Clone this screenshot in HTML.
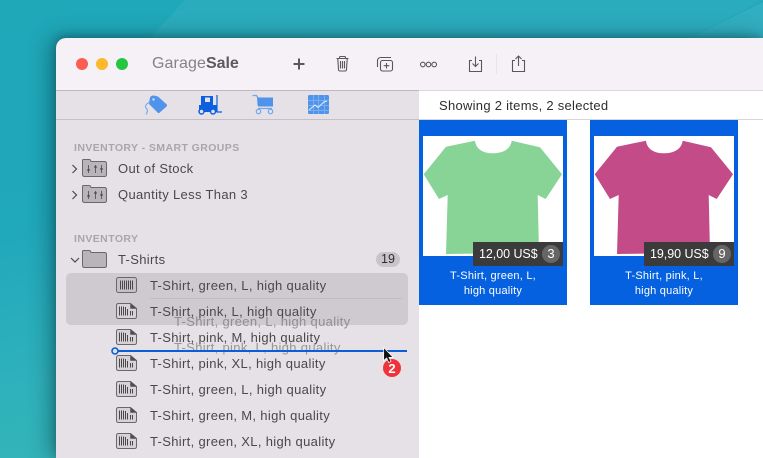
<!DOCTYPE html>
<html><head><meta charset="utf-8">
<style>
html,body{margin:0;padding:0;width:763px;height:458px;overflow:hidden}
body{position:relative;font-family:"Liberation Sans",sans-serif;background:#2aaeb8}
.abs{position:absolute}
.bg{left:0;top:0;width:763px;height:458px;background:linear-gradient(165deg,#1fa8b8 0%,#20a8bb 35%,#2fb2bc 60%,#3fb8b0 100%)}
.win{left:56px;top:38px;width:707px;height:420px;background:#f5f1f7;border-radius:10px 0 0 0;box-shadow:-6px 0 22px rgba(0,40,50,.42),0 -2px 8px rgba(0,40,50,.3);overflow:hidden}
.t{position:absolute;white-space:nowrap;font-size:13px;line-height:16px;color:#4b484c;letter-spacing:.33px}
.h{position:absolute;white-space:nowrap;font-size:10.5px;line-height:12px;font-weight:bold;color:#a9a6aa;letter-spacing:.42px}
.ghost{position:absolute;white-space:nowrap;font-size:13px;line-height:16px;color:#6a676b;opacity:.62;letter-spacing:.33px;filter:blur(.35px)}
.cap{position:absolute;text-align:center;color:#fff;font-size:11px;line-height:15px;width:148px;letter-spacing:.22px}
.price{position:absolute;width:90px;height:24px;background:#3b3b3b;color:#fff;font-size:12.5px;line-height:24px}
.price span{position:absolute;left:6px;top:0;white-space:nowrap;letter-spacing:-.05px}
.price b{position:absolute;left:69px;top:3px;width:18px;height:18px;border-radius:9px;background:#666;font-weight:normal;text-align:center;line-height:18px;font-size:13px}
</style></head><body>
<div class="abs bg"></div>
<svg class="abs" style="left:0;top:0" width="763" height="40"><path d="M150 38L185 0H763V0L690 38Z" fill="#fff" opacity=".05"/><path d="M690 38L763 2V38Z" fill="#fff" opacity=".08"/></svg>
<div class="abs win"></div>

<!-- panes -->
<div class="abs" style="left:56px;top:90px;width:363px;height:368px;background:#e5e1e6"></div>
<div class="abs" style="left:419px;top:90px;width:344px;height:368px;background:#fff"></div>
<div class="abs" style="left:56px;top:90px;width:363px;height:1px;background:#bdb9bd"></div>
<div class="abs" style="left:419px;top:90px;width:344px;height:1px;background:#dcd8de"></div>
<div class="abs" style="left:56px;top:119px;width:363px;height:1px;background:#c4c0c5"></div>
<div class="abs" style="left:419px;top:119px;width:344px;height:1px;background:#d8d5d8"></div>

<!-- traffic lights -->
<div class="abs" style="left:76px;top:58px;width:12px;height:12px;border-radius:6px;background:#fd5c55"></div>
<div class="abs" style="left:96px;top:58px;width:12px;height:12px;border-radius:6px;background:#fdb82d"></div>
<div class="abs" style="left:116px;top:58px;width:12px;height:12px;border-radius:6px;background:#27c640"></div>

<div class="abs" style="left:152px;top:53px;font-size:16px;line-height:21px;color:#858287;white-space:nowrap;letter-spacing:.1px">Garage<span style="color:#5c595e;font-weight:bold;letter-spacing:-.05px">Sale</span></div>

<!-- toolbar + tab icons -->
<svg class="abs" style="left:0;top:0" width="763" height="125" fill="none" stroke="#5a575b">
<path d="M299 58.5V69.5M293.500 64H304.500" stroke-width="2"/>
<g stroke-width="1.1"><path d="M336.500 58.500H348.500M339.500 58.500V57.200Q339.500 56.500 340.500 56.500H344.500Q345.500 56.500 345.500 57.200V58.500M337.800 59L338.500 69.500Q338.600 71 340 71H345Q346.400 71 346.500 69.500L347.200 59M340.500 61V68.500M342.500 61V68.500M344.500 61V68.500"/>
<path d="M391 57.500H381Q377.500 57.500 377.500 61V67"/><rect x="380.500" y="60.500" width="12" height="10.500" rx="2"/><path d="M386.500 63V68.500M383.700 65.700H389.300"/>
<circle cx="422.800" cy="64.500" r="2.300"/><circle cx="428.500" cy="64.500" r="2.300"/><circle cx="434.200" cy="64.500" r="2.300"/>
<path d="M472 60.500H469.500V71.500H481.500V60.500H479M475.500 56.500V66M472.500 63.500L475.500 66.500L478.500 63.500"/>
<path d="M515 60.500H512.500V71.500H524.500V60.500H522M518.500 66V56.500M515.500 59L518.500 56L521.500 59"/></g>
<path d="M496.500 54V74" stroke="#e8e4ea" stroke-width="1"/>
<!-- tag -->
<path d="M153 95.500Q154 95.300 158 96.500L166.800 104.500Q167.300 105.500 166.800 106.300L159.500 112.800Q158.500 113.500 157.800 112.800L149.500 104.500Q149 104 149 103L150 97.500Q150.500 96 153 95.500Z" fill="#4f94ea" stroke="none"/>
<circle cx="153.500" cy="99.500" r="1.200" fill="#cfe0f6" stroke="none"/>
<path d="M150 102Q145 104 145.500 107.500Q149 110 146 114.500" stroke="#6ea6ec" stroke-width="1"/>
<!-- forklift -->
<path d="M201 96H213V105H217V112H199V105H201Z" fill="#0a60e0" stroke="none"/><rect x="205" y="97.500" width="5" height="4.500" fill="#e5e1e6" stroke="none"/>
<path d="M217 95V112H222" stroke="#0a60e0" stroke-width="1.200"/>
<circle cx="201.500" cy="111.500" r="2.500" fill="#e5e1e6" stroke="#0a60e0" stroke-width="1.500"/><circle cx="213" cy="111.500" r="2.500" fill="#e5e1e6" stroke="#0a60e0" stroke-width="1.500"/>
<!-- cart -->
<path d="M252.500 95.500H256.500L258 98V105" stroke="#6ea6ec" stroke-width="1.300"/><path d="M257 97.500H273V106.500H258Z" fill="#4f94ea" stroke="none"/><path d="M258 108.500H272" stroke="#6ea6ec" stroke-width="1.200"/>
<circle cx="258.500" cy="111.500" r="2.200" fill="#e5e1e6" stroke="#6ea6ec" stroke-width="1.200"/><circle cx="270.500" cy="111.500" r="2.200" fill="#e5e1e6" stroke="#6ea6ec" stroke-width="1.200"/>
<!-- chart -->
<rect x="308" y="95" width="21" height="19" rx="1.500" fill="#4f94ea" stroke="none"/>
<path d="M308 100.500H329M308 105.500H329M308 110.500H329M313.500 95V114M318.500 95V114M324.500 95V114" stroke="#78adef" stroke-width="1"/>
<path d="M309 110L315 105L318 107.500L324 102L327 101" stroke="#e6effb" stroke-width="1"/>
</svg>

<div class="t" style="left:439px;top:98px;color:#2f2d30;letter-spacing:.28px">Showing 2 items, 2 selected</div>

<!-- sidebar content -->
<div class="h" style="left:74px;top:142px">INVENTORY - SMART GROUPS</div>
<div class="h" style="left:74px;top:233px">INVENTORY</div>
<div class="abs" style="left:66px;top:273px;width:342px;height:52px;border-radius:5px;background:#cfcacf"></div>
<div class="abs" style="left:150px;top:298px;width:252px;height:1px;background:#c2bdc2"></div>

<div class="t" style="left:118px;top:161px">Out of Stock</div>
<div class="t" style="left:118px;top:187px">Quantity Less Than 3</div>
<div class="t" style="left:118px;top:252px">T-Shirts</div>
<div class="t" style="left:150px;top:278px">T-Shirt, green, L, high quality</div>
<div class="t" style="left:150px;top:304px">T-Shirt, pink, L, high quality</div>
<div class="t" style="left:150px;top:330px">T-Shirt, pink, M, high quality</div>
<div class="t" style="left:150px;top:356px">T-Shirt, pink, XL, high quality</div>
<div class="t" style="left:150px;top:382px">T-Shirt, green, L, high quality</div>
<div class="t" style="left:150px;top:408px">T-Shirt, green, M, high quality</div>
<div class="t" style="left:150px;top:434px">T-Shirt, green, XL, high quality</div>

<div class="abs" style="left:376px;top:252px;width:24px;height:15px;border-radius:8px;background:#c8c4c8;color:#2f2d30;font-size:12.500px;line-height:15px;text-align:center">19</div>

<svg class="abs" style="left:0;top:0" width="420" height="458" fill="none" stroke="#5b585c" stroke-width="1">
<defs>
<g id="bc0"><rect x=".5" y=".5" width="20" height="15" rx="2" fill="#c6c1c6" stroke="#6a676b"/><path d="M4.500 3.500V12.500M6.500 3.500V12.500M8.500 3.500V12.500M10.500 3.500V12.500M12.500 3.500V12.500M14.500 3.500V12.500M16.500 3.500V12.500" stroke="#4a474b" stroke-width="1"/></g>
<g id="bc"><path d="M2.500 .5H14.500L20.500 5.500V13.500Q20.500 15.500 18.500 15.500H2.500Q.5 15.500 .5 13.500V2.500Q.5 .5 2.500 .5Z" fill="#d6d2d6" stroke="#6a676b"/><path d="M14.500 .5L20.500 5.500H14.500Z" fill="#514e52" stroke="#514e52" stroke-width=".5"/><path d="M3.500 3.500V12.500M5.500 3.500V12.500M7.500 3.500V12.500M9.500 4V12.500M11.500 6V12.500M14.500 8V12.500M16.500 8V12.500" stroke="#4a474b" stroke-width="1"/></g>
<g id="sf"><path d="M.5 4V1.500Q.5 .5 1.500 .5H7.500Q8.500 .5 9 2.500H22.500Q24.500 2.500 24.500 4.500V15.500Q24.500 17.500 22.500 17.500H2.500Q.5 17.500 .5 15.500Z" fill="#b9b4b9" stroke="#6a676b"/><path d="M6.500 6V14M13.500 6V14M19.500 6V14" stroke="#4a474b" stroke-width=".8"/><path d="M5 11H8M12 8H15M18 10H21" stroke="#3f3d40" stroke-width="1"/></g>
</defs>
<use href="#sf" x="82" y="159"/><use href="#sf" x="82" y="185"/>
<g transform="translate(82 250)"><path d="M.5 4V1.500Q.5 .5 1.500 .5H7.500Q8.500 .5 9 2.500H22.500Q24.500 2.500 24.500 4.500V15.500Q24.500 17.500 22.500 17.500H2.500Q.5 17.500 .5 15.500Z" fill="#b9b4b9" stroke="#6a676b"/></g>
<path d="M72.500 165L76.500 169L72.500 173M72.500 191L76.500 195L72.500 199M71 258L75 262L79 258" stroke="#4b484c" stroke-width="1.200"/>
<use href="#bc0" x="116" y="277"/>
<use href="#bc" x="116" y="303"/><use href="#bc" x="116" y="329"/><use href="#bc" x="116" y="355"/><use href="#bc" x="116" y="381"/><use href="#bc" x="116" y="407"/><use href="#bc" x="116" y="433"/>
</svg>

<div class="ghost" style="left:174px;top:314px">T-Shirt, green, L, high quality</div>
<div class="ghost" style="left:174px;top:340px">T-Shirt, pink, L, high quality</div>

<svg class="abs" style="left:0;top:0" width="420" height="458">
<path d="M118 351H407" stroke="#0a5fd8" stroke-width="2"/>
<circle cx="115" cy="351" r="3" fill="#e5e1e6" stroke="#0a5fd8" stroke-width="1.600"/>
<circle cx="392" cy="368" r="9" fill="#f0333a"/>
<path d="M383.700 347.500V360.500L386.700 358L388.700 362.500L391 361.500L389 357.300H393Z" fill="#111" stroke="#fff" stroke-width=".7"/>
<text x="392" y="373" text-anchor="middle" font-family="Liberation Sans" font-size="13" font-weight="bold" fill="#fff">2</text>
</svg>

<!-- cards -->
<div class="abs" style="left:419px;top:120px;width:148px;height:185px;background:#0561e0"></div>
<div class="abs" style="left:423px;top:136px;width:140px;height:120px;background:#fff"></div>
<svg class="abs" style="left:423px;top:136px" width="140" height="120"><path d="M52 4.700C53 13 60 17.300 70 17.300C80 17.300 87.500 13 88.700 4.700L117 11.300L139 38.300L122.700 63L114.700 59L116 116.700L23 118L24.700 59L16 63L.7 38.300L23 10.700Z" fill="#88d497"/></svg>
<div class="price" style="left:473px;top:242px"><span>12,00 US$</span><b>3</b></div>
<div class="cap" style="left:419px;top:269px">T-Shirt, green, L,<br>high quality</div>

<div class="abs" style="left:590px;top:120px;width:148px;height:185px;background:#0561e0"></div>
<div class="abs" style="left:594px;top:136px;width:140px;height:120px;background:#fff"></div>
<svg class="abs" style="left:594px;top:136px" width="140" height="120"><path d="M52 4.700C53 13 60 17.300 70 17.300C80 17.300 87.500 13 88.700 4.700L117 11.300L139 38.300L122.700 63L114.700 59L116 116.700L23 118L24.700 59L16 63L.7 38.300L23 10.700Z" fill="#c24b88"/></svg>
<div class="price" style="left:644px;top:242px"><span>19,90 US$</span><b>9</b></div>
<div class="cap" style="left:590px;top:269px">T-Shirt, pink, L,<br>high quality</div>
</body></html>
